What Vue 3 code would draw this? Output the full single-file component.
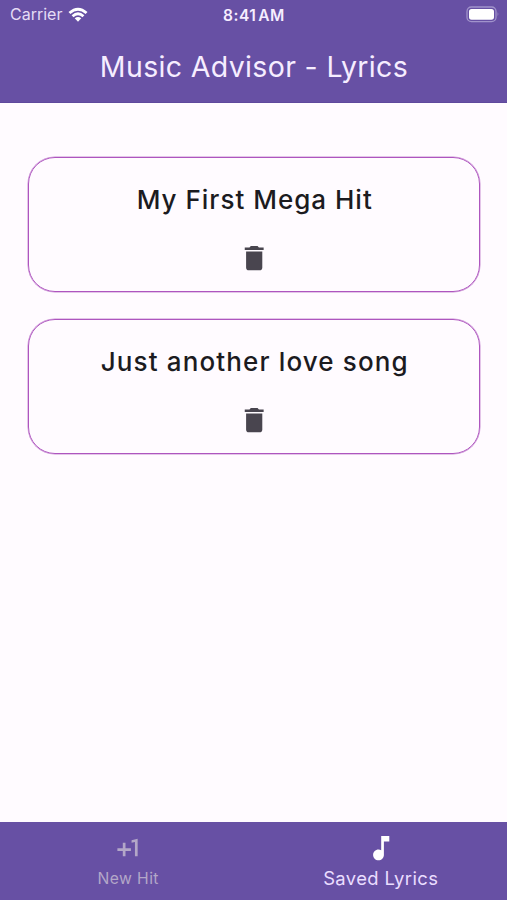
<script setup>
const songs = ['My First Mega Hit', 'Just another love song']
</script>

<template>
  <div class="screen">
    <header class="top">
      <div class="status">
        <div class="carrier">
          <span class="carrier-name">Carrier</span>
          <svg class="wifi" viewBox="0 0 20 15">
            <path d="M.5 5.1Q10-3.7 19.5 5.1L17.6 7.1Q10 .3 2.4 7.1Z" />
            <path d="M3.6 8.2Q10 2.4 16.4 8.2L14.5 10.2Q10 6.3 5.5 10.2Z" />
            <path d="M6.7 11.3Q10 8.5 13.3 11.3L10 14.8Z" />
          </svg>
        </div>
        <span class="time">8:41<i class="thin"></i>AM</span>
        <svg class="battery" viewBox="0 0 34 17">
          <rect x="1" y="1" width="29" height="14.6" rx="4.4" fill="none" stroke="#a193cb" stroke-width="1.3" />
          <rect x="3" y="2.9" width="25" height="10.8" rx="2.6" fill="#fff" />
          <path d="M31.6 6q1.8 2.2 0 4.6Z" fill="#a193cb" />
        </svg>
      </div>
      <h1 class="title">Music Advisor - Lyrics</h1>
    </header>

    <main class="list">
      <section v-for="(song, i) in songs" :key="song" class="card">
        <h2 class="song" :class="{ wide: i === 1 }">{{ song }}</h2>
        <svg class="icon trash" viewBox="0 0 24 24">
          <path d="M6 19c0 1.1.9 2 2 2h8c1.1 0 2-.9 2-2V7H6v12zM19 4h-3.5l-1-1h-5l-1 1H5v2h14V4z" />
        </svg>
      </section>
    </main>

    <nav class="tabs">
      <div class="tab">
        <svg class="icon" viewBox="0 0 24 24">
          <path d="M10 8H8v4H4v2h4v4h2v-4h4v-2h-4zm4.5-1.92V7.9l2.5-.5V18h2V5z" />
        </svg>
        <span class="label">New Hit</span>
      </div>
      <div class="tab active">
        <svg class="icon" viewBox="0 0 24 24">
          <path d="M12 3v10.55c-.59-.34-1.27-.55-2-.55-2.21 0-4 1.79-4 4s1.79 4 4 4 4-1.79 4-4V7h4V3h-6z" />
        </svg>
        <span class="label">Saved Lyrics</span>
      </div>
    </nav>
  </div>
</template>

<style>
body {
  margin: 0;
  background: #fffbff;
}
</style>

<style scoped>
.screen {
  display: flex;
  flex-direction: column;
  height: 900px;
  overflow: hidden;
  background: #fffbff;
  font-family: Inter, "Liberation Sans", sans-serif;
}

.top {
  box-sizing: border-box;
  height: 103px;
  background: #6750a4;
  border-bottom: 1px solid #5f499d;
  color: #f6edff;
}

.status {
  display: grid;
  grid-template-columns: 1fr auto 1fr;
  align-items: center;
  height: 29px;
  padding: 0 7px 0 10px;
}

.carrier {
  display: flex;
  align-items: center;
  gap: 6px;
}

.carrier-name {
  font-size: 16px;
  line-height: 19px;
  color: #e5dcf5;
}

.wifi {
  width: 20px;
  height: 15px;
  fill: #fff;
}

.time {
  margin-right: 2px;
  padding-top: 1px;
  font-size: 15.5px;
  font-weight: 600;
  letter-spacing: 0.5px;
}

.thin {
  display: inline-block;
  width: 2px;
}

.battery {
  justify-self: end;
  width: 34px;
  height: 17px;
}

.title {
  margin: 0;
  padding-left: 1px;
  line-height: 75px;
  text-align: center;
  font-size: 28.5px;
  font-weight: 400;
  letter-spacing: 0.35px;
  white-space: nowrap;
}

.list {
  flex: 1;
  display: flex;
  flex-direction: column;
  gap: 27px;
  padding: 54px 27px 0 28px;
}

.card {
  box-sizing: border-box;
  display: flex;
  flex-direction: column;
  align-items: center;
  height: 135px;
  border: 1px solid #ae55bf;
  border-radius: 27px;
  box-shadow: 0 0 0 0.5px #c98fd4;
}

.song {
  margin: 23px 0 0;
  padding-left: 1.5px;
  line-height: 38px;
  font-size: 26px;
  font-weight: 500;
  letter-spacing: 1px;
  white-space: nowrap;
  color: #1c1b1f;
}

.wide {
  letter-spacing: 1.13px;
}

.icon {
  width: 32.4px;
  height: 32.4px;
  fill: currentColor;
}

.trash {
  margin-top: 22.5px;
  color: #49454f;
}

.tabs {
  display: flex;
  box-sizing: border-box;
  height: 78px;
  background: #6750a4;
}

.tab {
  flex: 1;
  display: flex;
  flex-direction: column;
  align-items: center;
  padding: 9.5px 0 0 2px;
  color: #b3a7c8;
}

.label {
  margin-top: 3px;
  line-height: 24px;
  font-size: 15.7px;
  letter-spacing: 0.4px;
  white-space: nowrap;
}

.active {
  padding-left: 0;
  color: #fff;
}

.active .label {
  margin-top: 2px;
  font-size: 18.4px;
  color: #eaddff;
}
</style>
